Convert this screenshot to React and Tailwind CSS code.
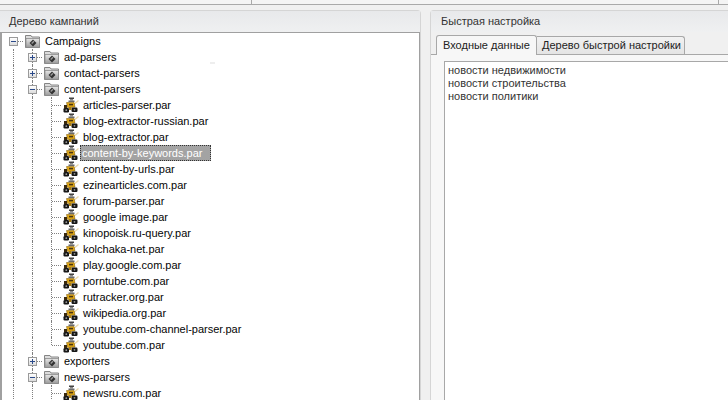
const FONT = "font-['Liberation_Sans',sans-serif]";

function Folder() {
  return (
    <svg width="16" height="16" viewBox="0 0 16 16" className="block">
      <defs>
        <linearGradient id="fg" x1="0" y1="0" x2="0" y2="1">
          <stop offset="0" stopColor="#e8e8e8" />
          <stop offset="1" stopColor="#9a9a9a" />
        </linearGradient>
      </defs>
      <path d="M0.5 2.5 L6 2.5 L7 4 L14.5 4 L14.5 14.5 L0.5 14.5 Z" fill="#dcdcdc" stroke="#858585" strokeWidth="1" />
      <rect x="1" y="5.5" width="13.5" height="9" fill="url(#fg)" stroke="#8c8c8c" strokeWidth="0.8" />
      <path d="M8 6.5 L11.5 10 L8 13.5 L4.5 10 Z" fill="#333" />
      <path d="M6.2 10 L8.5 7.7 L9.5 8.7 L7.2 11 Z" fill="#9a9a9a" />
    </svg>
  );
}

function Robot() {
  return (
    <svg width="16" height="16" viewBox="0 0 16 16" className="block">
      <path d="M10 8 L15.5 3.5" stroke="#ead9ac" strokeWidth="1.4" />
      <rect x="6" y="0.5" width="5" height="1.5" fill="#444" />
      <rect x="7" y="2" width="3" height="1.5" fill="#888" />
      <rect x="5.5" y="3.5" width="6" height="1.5" fill="#6a6a6a" />
      <path d="M3.5 5.5 L11 5.5 L12 10 L4.5 10.5 Z" fill="#e0a818" stroke="#7a5500" strokeWidth="0.5" />
      <rect x="6" y="6.8" width="4" height="1.6" fill="#4a3510" />
      <rect x="1" y="8" width="3" height="3" fill="#3a2a10" />
      <rect x="0.5" y="11" width="5.5" height="4.5" rx="1.2" fill="#161616" />
      <rect x="8.5" y="10.5" width="6" height="4.5" rx="1.2" fill="#161616" />
      <rect x="6" y="10" width="2.5" height="3" fill="#a87c14" />
      <circle cx="3.3" cy="13.2" r="0.9" fill="#9a9a9a" />
      <circle cx="11.5" cy="12.8" r="0.9" fill="#9a9a9a" />
    </svg>
  );
}

function Line({ className, show = true }) {
  if (!show) return null;
  return <div className={"absolute border-l border-dotted border-[#808080] " + className} />;
}

function Expander({ open, last }) {
  return (
    <div className="relative w-[19px] h-4 shrink-0">
      <Line className="left-[9px] top-0 h-full" show={!last} />
      <div className="absolute left-[14px] top-2 w-[5px] border-t border-dotted border-[#808080]" />
      <div className="absolute left-[5px] top-[4px] w-[9px] h-[9px] border border-[#9a9a9a] bg-gradient-to-b from-white to-[#dcdcdc] flex items-center justify-center">
        <div className="relative w-[5px] h-[5px]">
          <div className="absolute left-0 top-[2px] w-[5px] h-px bg-[#2b4a8a]" />
          {!open && <div className="absolute left-[2px] top-0 w-px h-[5px] bg-[#2b4a8a]" />}
        </div>
      </div>
    </div>
  );
}

function Guide({ line }) {
  return (
    <div className="relative w-[19px] h-4 shrink-0">
      <Line className="left-[9px] top-0 h-full" show={line} />
    </div>
  );
}

function Connector({ last }) {
  return (
    <div className="relative w-[19px] h-4 shrink-0">
      <Line className={last ? "left-[9px] top-0 h-2" : "left-[9px] top-0 h-full"} />
      <div className="absolute left-[10px] top-2 w-[9px] border-t border-dotted border-[#808080]" />
    </div>
  );
}

function Label({ children, selected }) {
  return selected ? (
    <span className="h-4 leading-[14px] pl-px pr-[8px] bg-[#a3a3a3] text-white border border-dotted border-[#333] whitespace-nowrap">
      {children}
    </span>
  ) : (
    <span className="ml-[3px] h-4 leading-4 text-[#050505] whitespace-nowrap">{children}</span>
  );
}

function FolderRow({ name, open }) {
  return (
    <div className="flex items-center h-4">
      <Guide />
      <Expander open={open} />
      <div className="w-[19px] pl-[2px] shrink-0"><Folder /></div>
      <Label>{name}</Label>
    </div>
  );
}

function FileRow({ name, selected, last }) {
  return (
    <div className="flex items-center h-4">
      <Guide />
      <Guide line />
      <Connector last={last} />
      <div className="w-[19px] pl-[2px] shrink-0"><Robot /></div>
      <Label selected={selected}>{name}</Label>
    </div>
  );
}

const files = [
  "articles-parser.par",
  "blog-extractor-russian.par",
  "blog-extractor.par",
  "content-by-keywords.par",
  "content-by-urls.par",
  "ezinearticles.com.par",
  "forum-parser.par",
  "google image.par",
  "kinopoisk.ru-query.par",
  "kolchaka-net.par",
  "play.google.com.par",
  "porntube.com.par",
  "rutracker.org.par",
  "wikipedia.org.par",
  "youtube.com-channel-parser.par",
  "youtube.com.par",
];

export default function App() {
  return (
    <div className={"w-[728px] h-[400px] overflow-hidden bg-[#f0f0f0] text-[11px] flex flex-col relative " + FONT}>
      <div className="h-[5px] shrink-0 flex bg-[#f4f4f4] border-b border-[#a9a9a9]">
        <div className="w-[252px] border-r border-[#a9a9a9]" />
        <div className="w-[467px] border-r border-[#a9a9a9]" />
      </div>
      <div className="flex-1 flex min-h-0 pt-[5px]">
        <div className="w-[421px] shrink-0 flex flex-col border-r border-[#d5d5d5] rounded-tr-[4px] border-t">
          <div className="h-[21px] flex items-center pl-[9px] text-[#333] bg-gradient-to-b from-[#e8e9eb] to-[#eff0f1]">
            Дерево кампаний
          </div>
          <div className="flex-1 bg-white border-l-[2px] border-t border-r border-[#a0a0a0] pl-[2px] overflow-hidden">
            <div className="flex items-center h-4">
              <Expander open last />
              <div className="w-[19px] pl-[2px] shrink-0"><Folder /></div>
              <Label>Campaigns</Label>
            </div>
            <FolderRow name="ad-parsers" />
            <FolderRow name="contact-parsers" />
            <FolderRow name="content-parsers" open />
            {files.map((f, i) => (
              <FileRow key={f} name={f} selected={i === 3} last={i === files.length - 1} />
            ))}
            <FolderRow name="exporters" />
            <FolderRow name="news-parsers" open />
            <FileRow name="newsru.com.par" />
          </div>
        </div>
        <div className="w-[9px] shrink-0" />
        <div className="flex-1 flex flex-col border-l border-t border-[#d5d5d5] rounded-tl-[4px] min-w-0">
          <div className="h-[21px] flex items-center pl-[10px] text-[#333] bg-gradient-to-b from-[#e8e9eb] to-[#eff0f1]">
            Быстрая настройка
          </div>
          <div className="flex items-end h-[20px] pl-[5px] mt-[2px] relative">
            <div className="h-[20px] w-[101px] bg-[#f7f7f7] border border-b-0 border-[#a8a8a8] rounded-t-[3px] flex items-center pl-[6px] text-[#222] relative z-10 -mb-px">
              Входные данные
            </div>
            <div className="h-[18px] w-[148px] bg-gradient-to-b from-[#f2f2f2] to-[#e4e4e4] border border-l-0 border-b-0 border-[#a8a8a8] rounded-tr-[3px] flex items-center pl-[5px] text-[#222]">
              Дерево быстрой настройки
            </div>
          </div>
          <div className="flex-1 bg-[#f7f7f7] border-t border-[#a8a8a8] pt-[6px] pl-[13px]">
            <div className="h-full bg-white border-l border-t border-[#a8a8a8] pt-[2px] pl-[3px] text-[#333] leading-[13px]">
              <div>новости недвижимости</div>
              <div>новости строительства</div>
              <div>новости политики</div>
            </div>
          </div>
        </div>
      </div>
      <div className="absolute left-[210px] top-[62px] w-[5px] h-[2px] bg-[#eeeeee]" />
    </div>
  );
}
